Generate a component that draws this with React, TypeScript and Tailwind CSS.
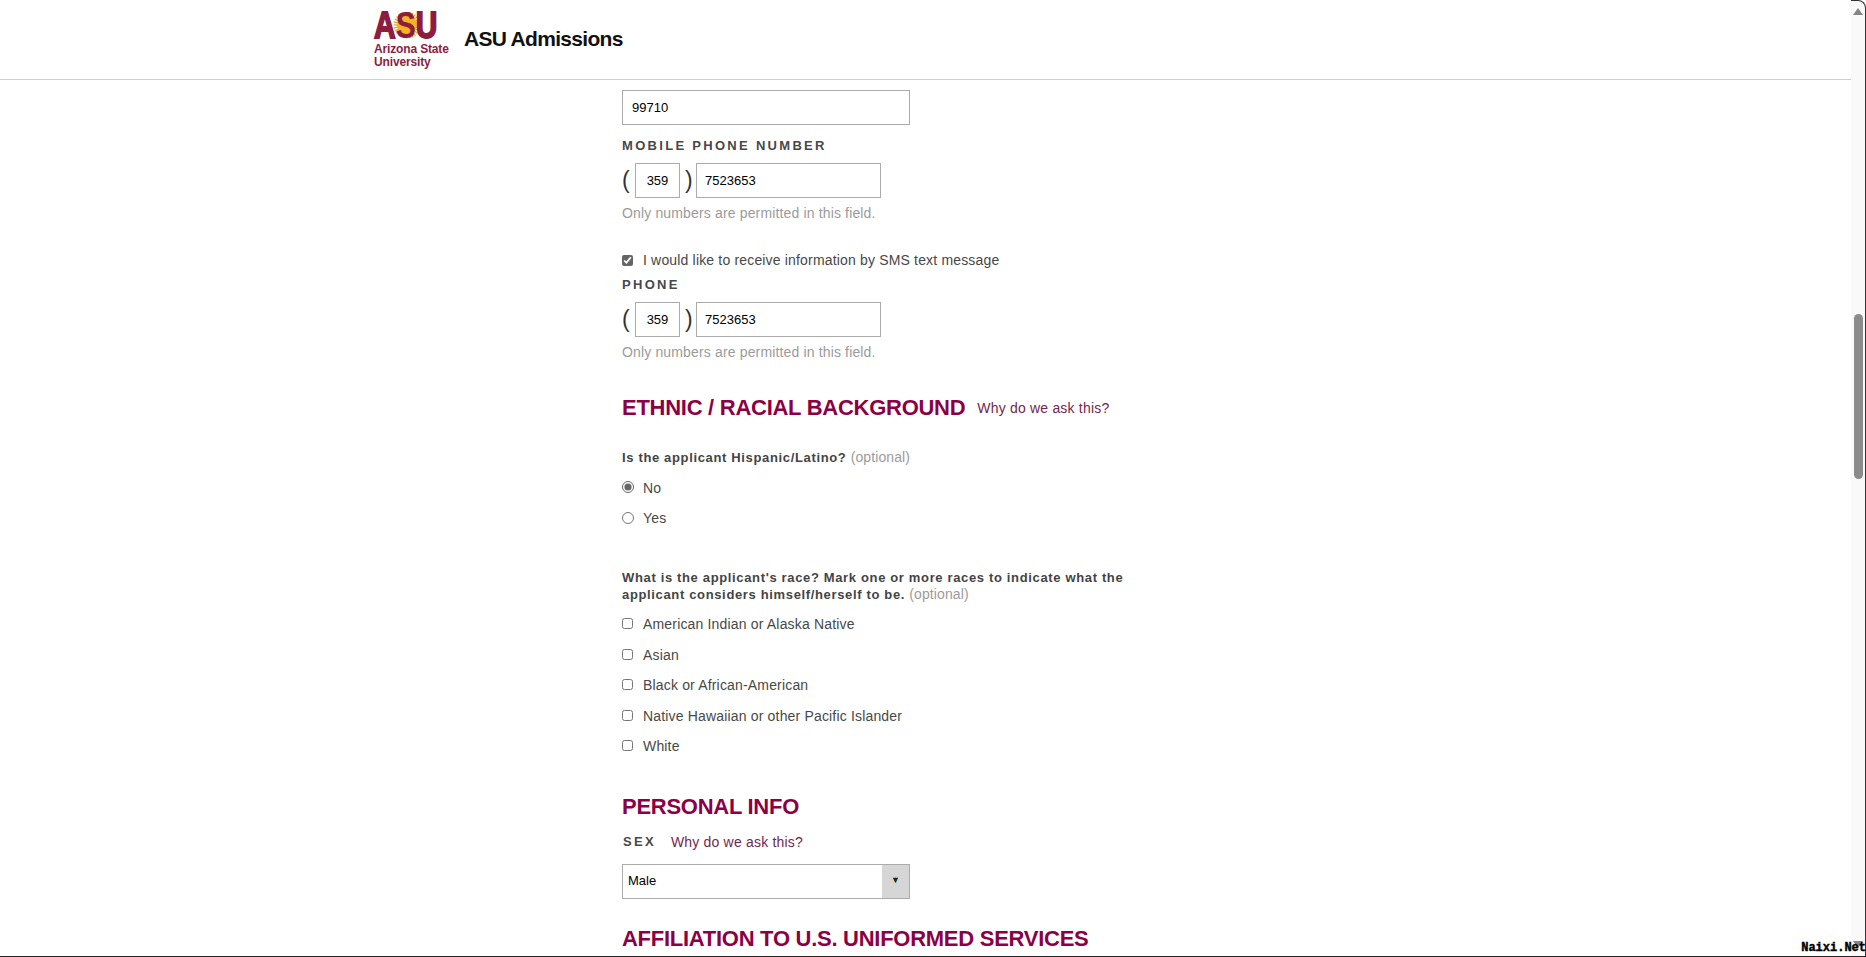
import React from 'react';

const ArialFont = "font-['Liberation_Sans',Arial,sans-serif]";

const AsuLogo = () => (
  <div className="w-[78px] shrink-0">
    <div className="relative h-[27px] w-[64px]">
      <svg width="64" height="27" viewBox="0 0 64 27" className="absolute left-0 top-0">
        <g stroke="#f0a81e" strokeWidth="1.3">
          {Array.from({ length: 28 }).map((_, i) => {
            const a = (i / 28) * Math.PI * 2;
            return <line key={i} x1={33 + Math.cos(a) * 8} y1={13 + Math.sin(a) * 8} x2={33 + Math.cos(a) * 13.5} y2={13 + Math.sin(a) * 13.5} />;
          })}
        </g>
        <circle cx="33" cy="13" r="10" fill="#f6b21f" />
      </svg>
      <span className="absolute left-0 top-0 origin-top-left scale-x-[0.81] text-[37px] leading-[27px] font-bold text-[#8c1d40] [-webkit-text-stroke:1.8px_#8c1d40]">
        A<span className="[-webkit-text-stroke:0.2px_#8c1d40]">S</span>U
      </span>
    </div>
    <div className="mt-[4px] text-[12px] leading-[12.5px] font-bold text-[#8c1d40] tracking-[-0.15px]">
      Arizona State
      <br />
      University
    </div>
  </div>
);

const Header = () => (
  <header className="h-[80px] shrink-0 border-b border-[#cfcfcf] bg-white pl-[374px] pt-[12px]">
    <div className="flex items-start">
      <AsuLogo />
      <h1 className="ml-[12px] mt-[12px] text-[21px] leading-[30px] font-bold text-[#111] tracking-[-0.7px]">ASU Admissions</h1>
    </div>
  </header>
);

const TextField = ({ value, className }: { value: string; className: string }) => (
  <input
    readOnly
    value={value}
    className={`h-[35px] border border-[#ababab] bg-white pb-[1px] text-[13px] text-black outline-none ${className}`}
  />
);

const FieldLabel = ({ children, className = '' }: { children: React.ReactNode; className?: string }) => (
  <div className={`text-[13px] leading-[16px] font-bold tracking-[2.3px] text-[#484848] ${className}`}>{children}</div>
);

const PhoneRow = () => (
  <div className="flex items-center">
    <span className="w-[13px] pb-[1px] text-[23px] leading-[30px] font-light text-[#333]">(</span>
    <TextField value="359" className="w-[45px] text-center" />
    <span className="w-[16px] pb-[1px] pl-[5px] text-[23px] leading-[30px] font-light text-[#333]">)</span>
    <TextField value="7523653" className="w-[185px] pl-[8px]" />
  </div>
);

const HelpText = ({ className = '' }: { className?: string }) => (
  <p className={`text-[14px] leading-[18px] tracking-[0.15px] text-[#9b9b9b] ${className}`}>Only numbers are permitted in this field.</p>
);

const SectionHeading = ({ children }: { children: React.ReactNode }) => (
  <h2 className="text-[22px] leading-[28px] font-bold text-[#8c0045] tracking-[-0.27px]">{children}</h2>
);

const WhyLink = ({ className = '' }: { className?: string }) => (
  <a className={`text-[14px] tracking-[0.19px] text-[#74274c] ${className}`}>Why do we ask this?</a>
);

const Question = ({ children, className = '' }: { children: React.ReactNode; className?: string }) => (
  <p className={`text-[13px] leading-[16px] font-bold tracking-[0.65px] text-[#444] ${className}`}>{children}</p>
);

const Optional = () => <span className="font-normal tracking-[0.1px] text-[14px] text-[#9b9b9b]">(optional)</span>;

const Choice = ({ type, label, checked }: { type: 'radio' | 'checkbox'; label: string; checked?: boolean }) => (
  <label className="flex h-[30.4px] items-center text-[14px] tracking-[0.17px] text-[#484848]">
    <input
      type={type}
      readOnly
      checked={!!checked}
      className={type === 'radio' ? 'mb-[2px] mr-[9px] size-[12px] accent-[#666]' : 'mb-[2px] mr-[10px] size-[11px] accent-[#666]'}
    />
    {label}
  </label>
);

const races = [
  'American Indian or Alaska Native',
  'Asian',
  'Black or African-American',
  'Native Hawaiian or other Pacific Islander',
  'White',
];

const Scrollbar = () => (
  <div className="flex w-[15px] shrink-0 flex-col items-center rounded-tr-[8px] border-t border-r border-[#333] bg-[#f9f9f9] pt-[7px]">
    <div className="h-0 w-0 border-x-[5px] border-b-[7px] border-x-transparent border-b-[#858585]" />
    <div className="mt-[299px] h-[165px] w-[9px] rounded-full bg-[#8b8b8b]" />
    <div className="mt-[462px] h-0 w-0 border-x-[5px] border-t-[7px] border-x-transparent border-t-[#858585]" />
  </div>
);

export default function App() {
  return (
    <div className={`relative flex h-[957px] w-[1866px] overflow-hidden bg-white ${ArialFont}`}>
      <div className="flex min-w-0 flex-1 flex-col">
        <Header />
        <main className="pl-[622px] pt-[10px]">
          <TextField value="99710" className="block w-[288px] pl-[9px]" />
          <FieldLabel className="mt-[13px] mb-[9px]">MOBILE PHONE NUMBER</FieldLabel>
          <PhoneRow />
          <HelpText className="mt-[6px]" />
          <div className="mt-[29px]">
            <label className="flex items-center text-[14px] leading-[18px] tracking-[0.17px] text-[#484848]">
              <input type="checkbox" readOnly checked className="mr-[10px] size-[11px] accent-[#666]" />
              I would like to receive information by SMS text message
            </label>
          </div>
          <FieldLabel className="mt-[8px] mb-[9px]">PHONE</FieldLabel>
          <PhoneRow />
          <HelpText className="mt-[6px]" />

          <div className="mt-[33px] flex items-center gap-[12px]">
            <SectionHeading>ETHNIC / RACIAL BACKGROUND</SectionHeading>
            <WhyLink />
          </div>
          <Question className="mt-[27px]">
            Is the applicant Hispanic/Latino? <Optional />
          </Question>
          <div className="mt-[7px]">
            <Choice type="radio" label="No" checked />
            <Choice type="radio" label="Yes" />
          </div>
          <Question className="mt-[36px] w-[540px]">
            What is the applicant's race? Mark one or more races to indicate what the
            <br />
            applicant considers himself/herself to be. <Optional />
          </Question>
          <div className="mt-[7px]">
            {races.map((r) => (
              <Choice key={r} type="checkbox" label={r} />
            ))}
          </div>

          <div className="mt-[31px]">
            <SectionHeading>PERSONAL INFO</SectionHeading>
          </div>
          <div className="mt-[11px] flex items-center gap-[15px]">
            <FieldLabel className="pl-[1px]">SEX</FieldLabel>
            <WhyLink />
          </div>
          <div className="mt-[11px] flex h-[35px] w-[288px] border border-[#ababab] bg-white text-[13px] text-black">
            <span className="flex-1 pl-[5px] leading-[32px]">Male</span>
            <span className="flex w-[27px] items-center justify-center bg-[#d6d6d6] text-[9px] text-[#222]">▼</span>
          </div>
          <div className="mt-[26px]">
            <SectionHeading>AFFILIATION TO U.S. UNIFORMED SERVICES</SectionHeading>
          </div>
        </main>
      </div>
      <Scrollbar />
      <div className="absolute bottom-0 left-0 h-[1px] w-full bg-[#222]" />
      <div className="absolute bottom-[2px] right-0 font-['Liberation_Mono',monospace] text-[12px] leading-[14px] font-bold text-black [-webkit-text-stroke:0.4px_black]">Naixi.Net</div>
    </div>
  );
}
